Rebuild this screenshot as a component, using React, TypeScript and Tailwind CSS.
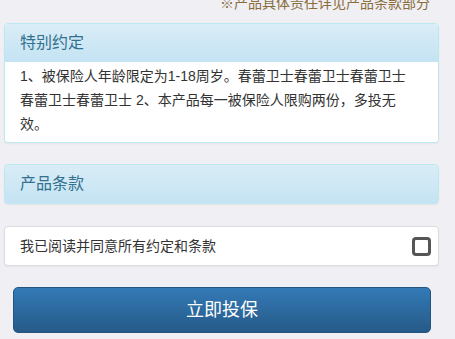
import React from 'react';

const font = { fontFamily: '"Liberation Sans", "Noto Sans CJK SC", sans-serif' };

function PanelHeading({ title }: { title: string }) {
  return (
    <div className="flex h-[38px] items-center rounded-t-[4px] bg-gradient-to-b from-[#d9edf7] to-[#c4e3f3] px-[15px] text-[16px] text-[#31708f]">
      {title}
    </div>
  );
}

export default function App() {
  return (
    <div className="h-[339px] w-[455px] overflow-hidden bg-[#efeff4]" style={font}>
      {/* Note */}
      <p className="-mt-[7px] pr-[25px] text-right text-[14px] leading-[20px] text-[#8a6d3b]">
        ※产品具体责任详见产品条款部分
      </p>

      {/* 特别约定 */}
      <div className="ml-[4px] mt-[10px] w-[435px] rounded-[4px] border border-[#bce8f1] bg-white shadow-[0_1px_2px_rgba(0,0,0,0.05)]">
        <PanelHeading title="特别约定" />
        <div className="rounded-b-[4px] bg-white px-[15px] pb-[6px] pt-[2px] text-[14px] leading-[24px] text-[#333]">
          1、被保险人年龄限定为1-18周岁。春蕾卫士春蕾卫士春蕾卫士
          <br />
          春蕾卫士春蕾卫士 2、本产品每一被保险人限购两份，多投无
          <br />
          效。
        </div>
      </div>

      {/* 产品条款 */}
      <div className="ml-[4px] mt-[21px] w-[435px] rounded-[4px] border border-[#bce8f1] shadow-[0_1px_2px_rgba(0,0,0,0.05)]">
        <div className="rounded-[4px]">
          <PanelHeading title="产品条款" />
        </div>
      </div>

      {/* Agree */}
      <div className="ml-[4px] mt-[22px] flex h-[40px] w-[435px] items-center justify-between rounded-[4px] border border-[#dddddd] bg-white pl-[15px] pr-[7px] shadow-[0_1px_2px_rgba(0,0,0,0.05)]">
        <span className="text-[14px] text-[#333]">我已阅读并同意所有约定和条款</span>
        <span className="h-[19px] w-[19px] rounded-[4px] border-[3px] border-[#555] bg-white" />
      </div>

      {/* Submit */}
      <button className="ml-[13px] mt-[21px] flex h-[46px] w-[418px] items-center justify-center rounded-[5px] border border-[#245580] bg-gradient-to-b from-[#337ab7] to-[#265a88] text-[18px] text-white">
        立即投保
      </button>
    </div>
  );
}
